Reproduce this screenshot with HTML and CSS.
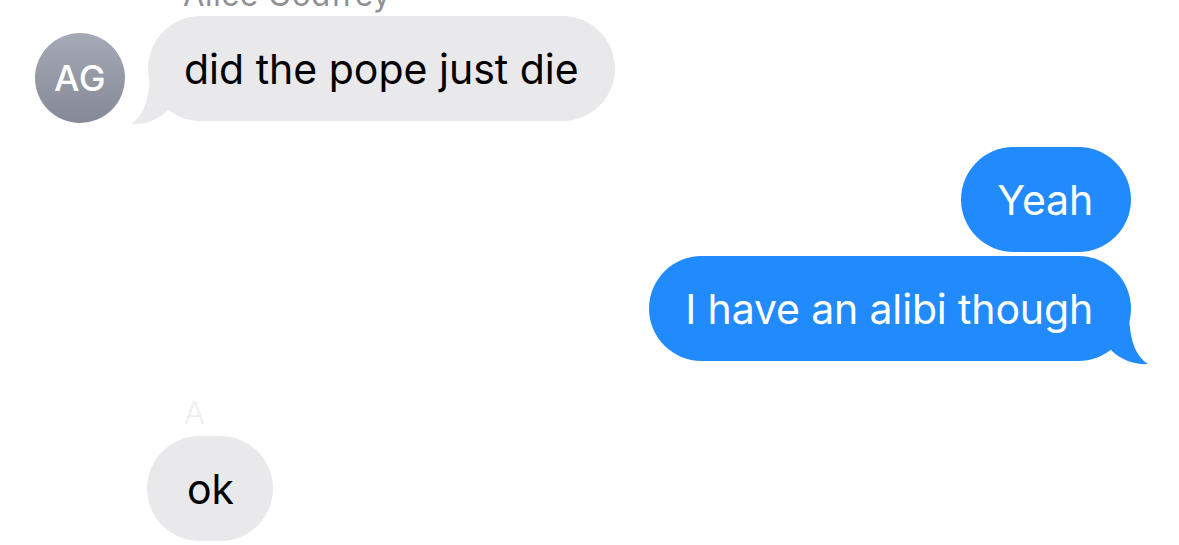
FILE: index.html
```html
<!DOCTYPE html>
<html>
<head>
<meta charset="utf-8">
<link rel="stylesheet" href="styles.css">
</head>
<body>
<div class="thread">
  <div class="sender">Alice Godfrey</div>
  <div class="row-them">
    <div class="avatar">AG</div>
    <div class="bubble them tailed">
      did the pope just die
      <svg class="tail tail-left" viewBox="0 0 60 50" width="60" height="50"><path d="M20 0 C19 27 13 41 1 49 C13 50 28 45 37 36 L52 18 Z"/></svg>
    </div>
  </div>
  <div class="group-me">
    <div class="bubble me">Yeah</div>
    <div class="bubble me tailed">
      I have an alibi though
      <svg class="tail tail-right" viewBox="0 0 60 50" width="60" height="50"><path d="M20 0 C19 27 13 41 1 49 C13 50 28 45 37 36 L52 18 Z"/></svg>
    </div>
  </div>
  <div class="sender faint">A</div>
  <div class="row-plain">
    <div class="bubble them">ok</div>
  </div>
  <div class="divider"></div>
</div>
</body>
</html>
```

FILE: styles.css
```css
html, body {
  margin: 0;
  padding: 0;
  background: #ffffff;
}
body {
  width: 1179px;
  height: 545px;
  overflow: hidden;
  font-family: "Inter", "Liberation Sans", sans-serif;
}
.thread {
  display: flex;
  flex-direction: column;
}
.sender {
  margin-left: 183px;
  margin-top: -23px;
  height: 39px;
  font-size: 31px;
  line-height: 36px;
  color: #8e8e93;
  letter-spacing: 0.7px;
}
.sender.faint {
  margin-top: 35px;
  height: 40px;
  margin-left: 184px;
  color: #efeff1;
  font-weight: 300;
  line-height: 34px;
}
.row-them {
  display: flex;
  align-items: flex-end;
  padding-left: 35px;
  gap: 23px;
}
.avatar {
  position: relative;
  z-index: 1;
  width: 90px;
  height: 90px;
  margin-bottom: -2px;
  border-radius: 50%;
  background: linear-gradient(180deg, #a6aab6 0%, #858995 100%);
  color: #ffffff;
  display: flex;
  align-items: center;
  justify-content: center;
  font-size: 36px;
  font-weight: 500;
  letter-spacing: 0.5px;
}
.bubble {
  position: relative;
  box-sizing: border-box;
  height: 105px;
  padding: 0 36px;
  border-radius: 53px;
  display: flex;
  align-items: center;
  font-size: 41px;
  line-height: 48px;
  letter-spacing: 0;
  white-space: nowrap;
}
.bubble.them {
  background: #e9e9eb;
  color: #000000;
}
.bubble.me {
  background: #218bfe;
  color: #ffffff;
  padding: 0 38px 0 36px;
  letter-spacing: -0.15px;
}
.tail {
  position: absolute;
  bottom: -4px;
  pointer-events: none;
}
.tail-left {
  left: -18px;
  fill: #e9e9eb;
}
.tail-right {
  right: -18px;
  fill: #218bfe;
  transform: scaleX(-1);
}
.group-me {
  margin-top: 26px;
  padding-right: 48px;
  display: flex;
  flex-direction: column;
  align-items: flex-end;
  gap: 4px;
}
.row-plain {
  display: flex;
  padding-left: 147px;
}
.row-plain .bubble {
  padding: 0 39px 0 40px;
}
.divider {
  margin-top: 4px;
  margin-left: 190px;
  width: 583px;
  height: 1px;
  background: #e3e3e5;
}
```
